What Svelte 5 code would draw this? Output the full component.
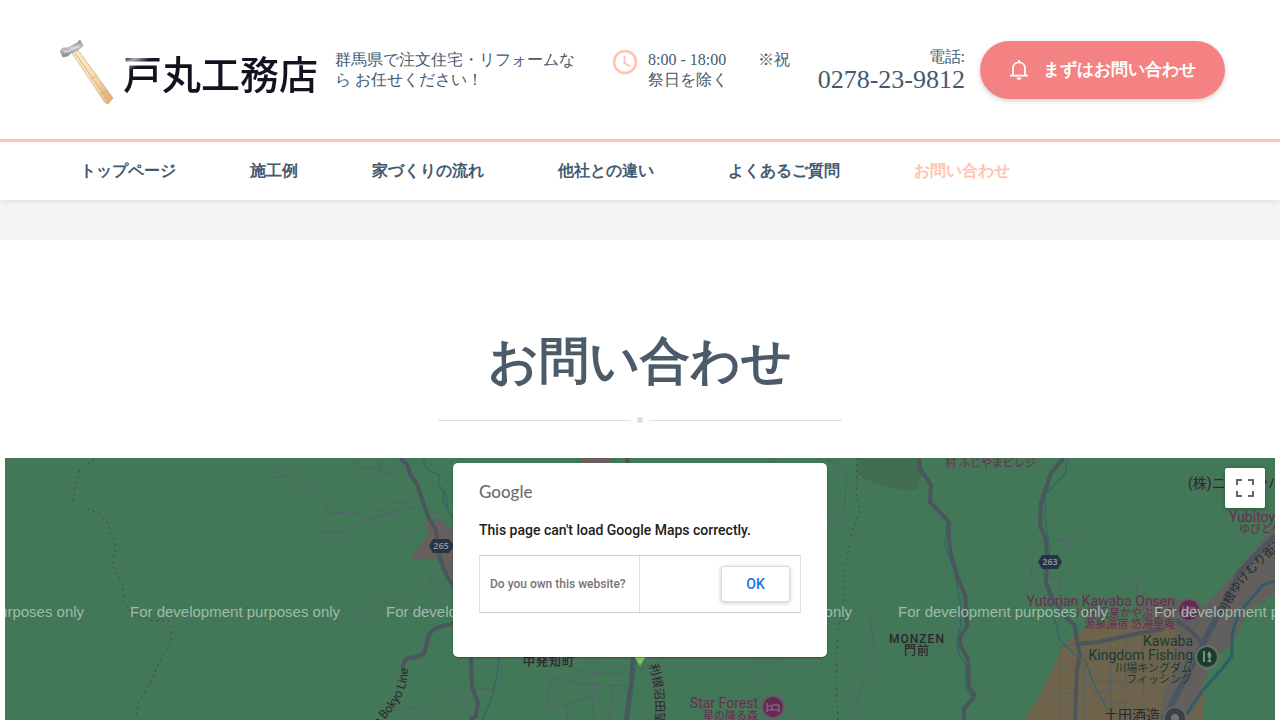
<script>
  const links = ['トップページ', '施工例', '家づくりの流れ', '他社との違い', 'よくあるご質問', 'お問い合わせ'];
  const current = 'お問い合わせ';
  const notices = [-126, 130, 386, 642, 898, 1154];

  const trails = [
    'M94 459 L80 470 L75 489 L72 506 M87 509 L99 513 L106 521 L114 538 L116 548 L113 561 L112 565 L121 581 L124 594 L123 602 L134 615 L153 621 L168 620 L172 631 L170 646 L161 658 L150 684 L138 703 L136 716',
    'M857 458 L856 493 L860 513 L853 529 L846 561 L843 585 L844 610 L838 626 L836 680 L838 720'
  ];
  const streets = [
    'M264 481 L268 478 L290 476 L307 485 L321 495 L322 501 L328 508 L327 513 L352 512 L365 517 L367 520 L341 532 L318 533',
    'M367 520 L390 513 L412 508 L422 504 M384 518 L382 515 L374 509 L390 513 M390 499 L392 502 L405 502 L412 508',
    'M400 540 L412 534 L423 525 M352 458 L355 467 L380 469 L387 475 L404 466 M370 475 L381 472 L376 458',
    'M427 513 L438 512 L444 522 L450 540 M430 588 L430 576 L440 569 L450 573 M430 588 L444 583 M435 587 L442 598 L456 592',
    'M350 616 L365 608 L377 608 L383 604 L398 603 L408 611 L430 610 L450 615',
    'M390 711 L407 706 L420 710 L434 716 L440 720 M442 695 L452 699 L462 694 L470 702 L460 711 L452 702 M475 688 L502 690',
    'M592 658 L592 697 L594 720 M578 671 L614 674 L634 674 M551 677 L582 684 L632 686 M551 677 L546 710 L560 706 L594 696 L620 710 M566 700 L568 720 M613 684 L609 720',
    'M640 671 L648 665 L656 676 L650 684 M758 658 L769 669 L757 688 L758 700 M752 671 L760 660 M769 669 L779 658 M788 714 L799 718',
    'M826 458 L846 470 L845 510 L841 521 L831 518 L827 530 M870 617 L875 652 L861 690 L849 720',
    'M1035 513 L1040 513 M1034 548 L1042 541 M1034 548 L1031 578 L1039 592 L1049 588 M1047 538 L1062 541 L1072 538 L1075 536 M1072 538 L1065 553 L1053 565 M1048 577 L1060 577 L1061 592',
    'M1131 592 L1127 584 L1134 576 L1137 583 L1136 603 M1077 644 L1060 646 L1059 720 M1060 668 L1078 670 M1060 693 L1076 693 M1085 665 L1084 720 M1110 638 L1111 720 M1126 634 L1125 720 M1082 653 L1092 660 L1115 657 M1143 630 L1144 706 M1084 682 L1146 682 M1100 700 L1138 705 M1092 694 L1110 690',
    'M1190 624 L1200 617 L1224 635 L1229 649 M1192 630 L1210 607 L1220 611 M1226 628 L1240 610 L1275 572 M1200 706 L1210 700 L1214 697 M1165 652 L1180 665 M1170 600 L1186 624',
    'M774 458 L770 471 M825 458 L835 464'
  ];
  const roads = [
    'M400 458 L407 464 L410 474 L417 484 L423 502 L429 519 L436 530 L438 552 L444 570 L454 588',
    'M470 620 L447 625 Q430 628 428 638 L425 651 Q423 657 408 658 Q402 662 403 670',
    'M471 655 L472 687 L478 703 L476 716 L470 720',
    'M633 655 L631 684 L628 704 L626 720',
    'M627 458 L629 470',
    'M919 458 L920 469 L931 485 L930 502 L949 522 Q948 540 951 553 L957 576 L965 595 L967 626 L960 637 L960 645 L968 659 L969 687 L975 696 L964 709 L964 720',
    'M1064 458 L1051 473 L1041 503 L1040 526 L1046 540 L1047 562 L1046 583 L1053 599 L1063 614 L1075 626 L1077 642 L1080 655 L1077 669 L1075 720',
    'M1077 644 L1098 642 L1140 633 L1164 629 M1176 620 L1190 630 L1202 643'
  ];
  const streams = [
    'M424 458 L424 465 L431 472 L440 475 L438 483 L443 491 L443 501 L451 516 L463 528',
    'M947 523 L945 545 L954 570 L960 600 L961 626 L956 642 L959 654 L966 665 L966 690 L974 698',
    'M1068 458 L1065 474 L1045 495 L1045 520 L1050 550 L1044 575 L1052 610 L1060 640 L1074 654 L1085 660 L1096 689 L1108 710',
    'M500 655 L495 684 L490 702 L482 720 M636 658 L632 695 L629 720 M445 490 L448 510'
  ];
</script>

<svelte:head><title>お問い合わせ | 戸丸工務店</title></svelte:head>

<div class="page" lang="ja">
  <header>
    <div class="top inner">
      <a class="logo" href="#top">
        <svg width="54" height="66" viewBox="0 0 54 66" aria-hidden="true">
          <defs>
            <linearGradient id="wood"><stop offset="0" stop-color="#fdeccb" /><stop offset=".55" stop-color="#f8dcae" /><stop offset="1" stop-color="#dcab6c" /></linearGradient>
            <linearGradient id="steel" x1="0" y1="0" x2="0" y2="1"><stop offset="0" stop-color="#8a8a8c" /><stop offset=".45" stop-color="#d4cdd8" /><stop offset="1" stop-color="#858585" /></linearGradient>
          </defs>
          <path d="M12 14 L18 11 L53 59 L48 65 Q44 64 42 59 Z" fill="url(#wood)" stroke="#b9a27e" stroke-width=".6" />
          <path d="M15 14 L47 60 M31 40 L37 36 M40 55 L48 51" stroke="#d3a468" stroke-width=".8" fill="none" />
          <path d="M0 12 L3 9 L8 9 L17 4 L20 1 L23 7 L19 10 L11 14 L8 17 L3 18 Z" fill="url(#steel)" stroke="#929095" stroke-width=".7" />
          <path d="M4 13 L9 12 L19 7" stroke="#eeeaf2" fill="none" />
        </svg>
        <span>戸丸工務店</span>
      </a>
      <p class="tagline">群馬県で注文住宅・リフォームなら お任せください！</p>
      <div class="hours">
        <svg width="28" height="28" viewBox="0 0 28 28" fill="none" stroke="#ffc4b0" aria-hidden="true">
          <circle cx="14" cy="14" r="11" stroke-width="2.6" />
          <path d="M13.5 8 V15 L19.5 18.5" stroke-width="2" />
        </svg>
        <p>8:00 - 18:00　　※祝祭日を除く</p>
      </div>
      <div class="phone">
        <span>電話:</span>
        <a href="tel:0278-23-9812">0278-23-9812</a>
      </div>
      <a class="cta" href="#map">
        <svg width="20" height="22" viewBox="0 0 20 22" aria-hidden="true">
          <path d="M4 16 V9.5 C4 6 6.5 3.4 10 3.4 S16 6 16 9.5 V16 M1 16.6 H19 M10 1 V3.5" fill="none" stroke="#fff" stroke-width="1.8" />
          <path d="M7.5 18.6 H12.5 Q12 21 10 21 T7.5 18.6 Z" fill="#fff" />
        </svg>
        まずはお問い合わせ
      </a>
    </div>
    <nav>
      <ul class="inner">
        {#each links as link}
          <li><a href="#top" class:active={link === current}>{link}</a></li>
        {/each}
      </ul>
    </nav>
  </header>

  <div class="band"></div>

  <main>
    <h1>お問い合わせ</h1>
    <div class="divider"><i></i></div>

    <section class="map" id="map" aria-label="Map">
      <svg class="canvas" viewBox="5 458 1270 262" preserveAspectRatio="xMidYMin slice">
        <rect x="5" y="458" width="1270" height="262" fill="#427857" />
        <path d="M857 474 Q885 492 917 490 L922 474 L916 458 H857 Z" fill="#436d50" />
        <path d="M1025 720 L1045 685 L1062 648 Q1075 635 1092 622 L1175 622 L1190 660 L1203 690 V720 Z" fill="#6e644b" />
        <path d="M1139 605 Q1150 598 1176 599 L1204 607 L1225 585 L1275 525 V594 L1254 607 Q1240 625 1231 644 L1218 656 L1200 690 L1194 715 L1160 720 L1163 694 L1178 661 L1174 630 L1150 624 Z" fill="#635f5c" />
        <path d="M411 556 L428 536 L425 522 Q436 515 447 525 L470 540 V580 L455 580 L436 559 L414 559 Z M580 458 H611 L608 464 H582 Z" fill="#675f5b" />
        <g fill="none" stroke-linejoin="round">
          {#each trails as d}<path {d} stroke="#38513f" stroke-dasharray="2 4" />{/each}
          {#each streets as d}<path {d} stroke="#52616a" />{/each}
          {#each streams as d}<path {d} stroke="#31646c" stroke-width="1.2" />{/each}
          {#each roads as d}<path {d} stroke="#4b555c" stroke-width="4" />{/each}
          <path d="M1163 720 L1177 694 L1206 638 L1222 607 L1240 572 L1275 536" stroke="#4b555f" stroke-width="6" />
          <path d="M1186 715 L1203 690 L1221 670 L1232 656 L1232 637 Q1234 620 1244 607 L1263 585 L1275 581" stroke="#315c69" stroke-width="3" />
        </g>

        <g class="shield">
          <path d="M429 546 L433 539 H449 L454 546 L449 553 H433 Z M1038 562 L1042 555 H1058 L1062 562 L1058 569 H1042 Z" fill="#273347" />
          <text x="441" y="549">265</text>
          <text x="1050" y="565">263</text>
        </g>
        <path d="M634 656 H646 L640 666 Z" fill="#7cc55e" />

        <g class="pins">
          <path d="M1177 610 a12 12 0 1 1 24 0 q0 7 -6 10 l-6 5 l-6 -5 q-6 -3 -6 -10Z" fill="#675865" />
          <circle cx="1189" cy="610" r="10" fill="#622b51" />
          <path class="glyph" d="M1183 606 V615 M1183 613 H1195 V608 H1188 V613" />
          <path d="M1195 657 a12 12 0 1 1 24 0 q0 7 -6 10 l-6 5 l-6 -5 q-6 -3 -6 -10Z" fill="#66706a" />
          <circle cx="1207" cy="657" r="10" fill="#1b3c2d" />
          <path class="rod" d="M1203 651 H1205 V662 H1203 Z M1209 651 Q1213 655 1210 659 L1212 662 H1207 L1209 659 Q1206 655 1209 651Z" />
          <circle cx="773" cy="707" r="12" fill="#65596a" /><circle cx="773" cy="707" r="10" fill="#622b51" />
          <path class="glyph" d="M767 703 V712 M767 710 H779 V712 M779 710 V705 H772 V710 M768 706 H771" />
          <circle cx="1175" cy="718" r="12" fill="#66666a" /><circle cx="1175" cy="718" r="10" fill="#3c4147" /><circle cx="1175" cy="718" r="4" fill="#717377" />
        </g>

        <g class="label dark">
          <text class="wide" x="917" y="643">MONZEN</text>
          <text class="wide" x="917" y="655">門前</text>
          <text class="wide" x="549" y="666">中発知町</text>
          <text x="1104" y="720">土田酒造</text>
          <text x="1188" y="488">(株)ニッシンハルナ</text>
          <path id="line-road" d="M346 760 C388 716 408 700 408 668" fill="none" stroke="none" />
          <text class="small road" text-anchor="end"><textPath href="#line-road" startOffset="100%">ria Bokyo Line</textPath></text>
          <path id="view-road" d="M649 665 C657 686 656 710 655 750" fill="none" stroke="none" />
          <text class="small road"><textPath href="#view-road">利根沼田望郷</textPath></text>
          <path id="steam-road" d="M1225 616 C1238 586 1254 566 1300 534" fill="none" stroke="none" />
          <text class="small road"><textPath href="#steam-road">利根ゆけむり街道</textPath></text>
        </g>
        <g class="label green" text-anchor="end">
          <text x="1193" y="646">Kawaba</text><text x="1193" y="660">Kingdom Fishing</text>
          <text class="small" x="1192" y="672">川場キングダム</text><text class="small" x="1192" y="683">フィッシング</text>
        </g>
        <g class="label plum" text-anchor="end">
          <text x="1175" y="606">Yutorian Kawaba Onsen</text>
          <text class="small" x="1175" y="617">川場温泉かやぶきの</text><text class="small" x="1175" y="628">源泉湯宿 悠湯里庵</text>
          <text x="758" y="708">Star Forest</text><text class="small" x="758" y="720">星の降る森</text>
          <text class="small" x="1036" y="467">村 ふじやまビレジ</text>
          <text x="1229" y="522" text-anchor="start">Yubitoya</text><text class="small" x="1239" y="533" text-anchor="start">ゆびとや</text>
        </g>
        <g class="notice">
          {#each notices as x}<text {x} y="617">For development purposes only</text>{/each}
        </g>
      </svg>

      <div class="dialog" role="dialog" aria-label="Google Maps">
        <span class="google">Google</span>
        <p>This page can't load Google Maps correctly.</p>
        <div class="actions">
          <a href="#map">Do you own this website?</a>
          <div><button type="button">OK</button></div>
        </div>
      </div>

      <button class="full" type="button" aria-label="Toggle fullscreen view">
        <svg width="18" height="18" viewBox="0 0 18 18" fill="none" stroke="#666" stroke-width="2">
          <path d="M1 6 V1 H6 M12 1 H17 V6 M17 12 V17 H12 M6 17 H1 V12" />
        </svg>
      </button>
    </section>
  </main>
</div>

<style>
  :global(body) { margin: 0; background: #fff; }
  * { box-sizing: border-box; }
  p, h1, ul { margin: 0; padding: 0; }
  a { color: inherit; text-decoration: none; }
  .page {
    display: flex; flex-direction: column; min-height: 100vh; overflow: hidden;
    color: #435a70; font: 16px/20px 'Liberation Serif', serif;
  }
  .inner { max-width: 1170px; margin: 0 auto; }
  header { position: relative; background: #fff; box-shadow: 0 1px 6px rgba(0, 0, 0, .1); }
  .top { display: flex; align-items: center; height: 139px; }
  .logo { display: flex; align-items: center; gap: 9px; width: 280px; padding: 4px 0 0 5px; flex: none; }
  .logo span {
    background: linear-gradient(150deg, #131320 6%, #aaaab4 11%, #131320 17%); background-clip: text;
    color: transparent; font: 500 39px/48px 'Noto Sans CJK JP', sans-serif; white-space: nowrap;
  }
  .tagline { width: 248px; }
  .hours { display: flex; align-items: flex-start; gap: 9px; margin-left: 28px; }
  .hours svg { flex: none; margin-top: -2px; }
  .hours p { width: 148px; }
  .phone { display: flex; flex-direction: column; align-items: flex-end; margin-left: auto; white-space: nowrap; }
  .phone a { font-size: 26px; line-height: 26px; }
  .cta {
    display: flex; align-items: center; justify-content: center; gap: 14px; flex: none;
    width: 245px; height: 58px; margin-left: 15px; border-radius: 29px;
    background: #f48282; color: #fff; font-weight: 700; font-size: 17px;
    box-shadow: 0 2px 5px rgba(0, 0, 0, .18);
  }
  nav { border-top: 3px solid #ffc4b0; }
  nav ul { display: flex; gap: 74px; padding: 0 25px; list-style: none; font-weight: 700; line-height: 58px; white-space: nowrap; }
  nav .active { color: #ffc4b0; }
  .band { height: 40px; background: #f5f5f5; }
  main { display: flex; flex-direction: column; flex: 1; padding: 90px 5px 0; }
  h1 { color: #4b5b69; font-size: 50px; line-height: 62px; font-weight: 700; text-align: center; }
  .divider { display: flex; align-items: center; gap: 6px; width: 404px; height: 6px; margin: 25px auto 35px; }
  .divider::before, .divider::after { content: ''; flex: 1; height: 1px; background: #d9e0e5; }
  .divider i { width: 6px; height: 6px; border-radius: 50%; background: #d9e0e5; }
  .map { position: relative; flex: 1; min-height: 262px; overflow: hidden; background: #427857; font-family: Roboto, 'Noto Sans CJK JP', sans-serif; }
  .canvas { position: absolute; inset: 0; width: 100%; height: 100%; }
  .shield text { fill: #8c949d; font: 600 9px 'Noto Sans', sans-serif; text-anchor: middle; }
  .label text { font-size: 14px; stroke: #65656255; stroke-width: 2px; paint-order: stroke; }
  .label .small { font-size: 11px; }
  .label .road { font-size: 12px; }
  .label .wide { font-size: 12px; font-weight: 500; letter-spacing: 1px; text-anchor: middle; }
  .dark text { fill: #242b2b; }
  .green text { fill: #1c3a2d; }
  .plum text { fill: #63304f; }
  .pins .glyph { fill: none; stroke: #98758f; stroke-width: 1; }
  .pins .rod { fill: #7d8f84; }
  .notice text { fill: #a0bbaa; font: 15px 'Liberation Sans', sans-serif; }
  .dialog {
    position: absolute; top: 5px; left: 50%; transform: translateX(-50%);
    width: 374px; height: 194px; padding: 18px 26px; border-radius: 5px;
    background: #fff; color: #212121; box-shadow: 0 1px 2px rgba(0, 0, 0, .3);
  }
  .google { display: block; color: #6b6f74; font: 500 17px/22px Lato, sans-serif; }
  .dialog p { margin: 17px 0 15px; font-size: 14px; line-height: 20px; font-weight: 500; }
  .actions { display: grid; grid-template-columns: 1fr 1fr; height: 58px; border: 1px solid #e0e0e0; border-top-color: #ccc; border-bottom-color: #ccc; }
  .actions > * { display: flex; align-items: center; padding: 0 10px; }
  .actions a { border-right: 1px solid #e0e0e0; color: #757575; font-size: 12px; font-weight: 500; white-space: nowrap; }
  .actions div { justify-content: flex-end; }
  .actions button {
    width: 69px; height: 36px; border: 1px solid #dadce0; border-radius: 3px; background: #fff;
    color: #1a73e8; font: 500 14px/20px Roboto, sans-serif; box-shadow: 0 1px 4px rgba(0, 0, 0, .22);
  }
  .full {
    position: absolute; top: 10px; right: 10px; display: grid; place-items: center;
    width: 40px; height: 40px; padding: 0; border: 0; border-radius: 2px; background: #fff;
    box-shadow: 0 1px 4px rgba(0, 0, 0, .3);
  }
</style>
